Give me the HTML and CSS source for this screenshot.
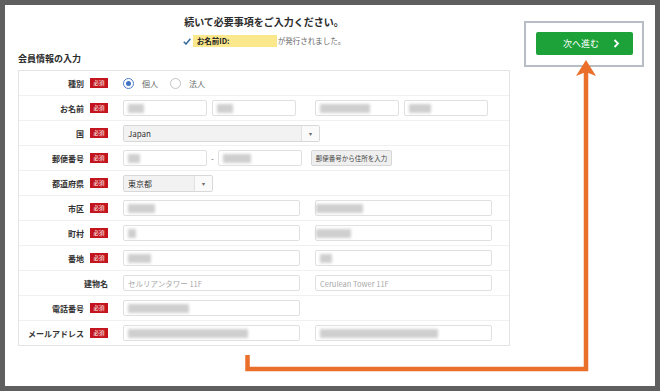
FILE: index.html
```html
<!DOCTYPE html>
<html lang="ja">
<head>
    <meta charset="UTF-8">
    <meta name="viewport" content="width=device-width, initial-scale=1.0">
    <title>会員情報の入力</title>
    <link rel="stylesheet" href="styles.css">
</head>
<body>
<div class="frame">
    <div class="page">
        <div class="main">
            <div class="lead">
                <h1>続いて必要事項をご入力ください。</h1>
                <p class="issued">
                    <svg class="check" width="8" height="7" viewBox="0 0 8 7"><path d="M0.8 3.8 L3 6 L7.4 0.8" fill="none" stroke="#3a6d9e" stroke-width="1.6"/></svg>
                    <span class="id-mark">お名前ID:</span>
                    <span class="issued-text">が発行されました。</span>
                </p>
            </div>
            <h2>会員情報の入力</h2>

            <div class="form-table">
                <div class="row">
                    <div class="label">種別<span class="req">必須</span></div>
                    <div class="field">
                        <span class="radio on"></span><span class="opt">個人</span>
                        <span class="radio"></span><span class="opt">法人</span>
                    </div>
                </div>
                <div class="row">
                    <div class="label">お名前<span class="req">必須</span></div>
                    <div class="field">
                        <span class="box w-half"><span class="blur b16"></span></span>
                        <span class="box w-half gap-5"><span class="blur b16"></span></span>
                        <span class="box w-half gap-19"><span class="blur b50"></span></span>
                        <span class="box w-half gap-5"><span class="blur b22"></span></span>
                    </div>
                </div>
                <div class="row">
                    <div class="label">国<span class="req">必須</span></div>
                    <div class="field">
                        <span class="select w-country"><span class="val">Japan</span><span class="caret">▾</span></span>
                    </div>
                </div>
                <div class="row">
                    <div class="label">郵便番号<span class="req">必須</span></div>
                    <div class="field">
                        <span class="box w-half"><span class="blur b12"></span></span>
                        <span class="dash">-</span>
                        <span class="box w-half"><span class="blur b28"></span></span>
                        <span class="zip-btn">郵便番号から住所を入力</span>
                    </div>
                </div>
                <div class="row">
                    <div class="label">都道府県<span class="req">必須</span></div>
                    <div class="field">
                        <span class="select w-pref"><span class="val">東京都</span><span class="caret">▾</span></span>
                    </div>
                </div>
                <div class="row">
                    <div class="label">市区<span class="req">必須</span></div>
                    <div class="field">
                        <span class="box w-full"><span class="blur b27"></span></span>
                        <span class="box w-full gap-15 flush"><span class="blur b47"></span></span>
                    </div>
                </div>
                <div class="row">
                    <div class="label">町村<span class="req">必須</span></div>
                    <div class="field">
                        <span class="box w-full"><span class="blur b8"></span></span>
                        <span class="box w-full gap-15 flush"><span class="blur b35"></span></span>
                    </div>
                </div>
                <div class="row">
                    <div class="label">番地<span class="req">必須</span></div>
                    <div class="field">
                        <span class="box w-full"><span class="blur b23"></span></span>
                        <span class="box w-full gap-15"><span class="blur b12"></span></span>
                    </div>
                </div>
                <div class="row">
                    <div class="label">建物名</div>
                    <div class="field">
                        <span class="box w-full placeholder">セルリアンタワー 11F</span>
                        <span class="box w-full gap-15 placeholder">Cerulean Tower 11F</span>
                    </div>
                </div>
                <div class="row">
                    <div class="label">電話番号<span class="req">必須</span></div>
                    <div class="field">
                        <span class="box w-full"><span class="blur b61"></span></span>
                    </div>
                </div>
                <div class="row">
                    <div class="label">メールアドレス<span class="req">必須</span></div>
                    <div class="field">
                        <span class="box w-full"><span class="blur b120"></span></span>
                        <span class="box w-full gap-15"><span class="blur b118"></span></span>
                    </div>
                </div>
            </div>
        </div>

        <div class="side">
            <div class="next-box">
                <button class="next-btn">次へ進む
                    <svg width="7" height="9" viewBox="0 0 7 9"><path d="M1.5 1 L5 4.5 L1.5 8" fill="none" stroke="#fff" stroke-width="1.8"/></svg>
                </button>
            </div>
        </div>

        <svg class="arrow" width="650" height="381" viewBox="0 0 650 381">
            <path d="M242.5 350 V364 H581 V66" fill="none" stroke="#ea6f2b" stroke-width="4.5"/>
            <polygon points="581,55 591,71 581,67 571,71" fill="#ea6f2b"/>
        </svg>
    </div>
</div>
</body>
</html>
```

FILE: styles.css
```css
* {
    box-sizing: border-box;
}

body {
    margin: 0;
    background: #5f5f5f;
    font-family: "Noto Sans CJK JP", "Noto Sans", sans-serif;
    color: #333;
}

.frame {
    padding: 5px;
    height: 391px;
}

.page {
    position: relative;
    display: flex;
    height: 381px;
    background: #fff;
}

.main {
    width: 505px;
    padding: 10px 0 0 13px;
}

.lead {
    text-align: center;
}

.lead h1 {
    margin: 0;
    font-size: 10px;
    line-height: 14px;
    font-weight: bold;
    color: #2b2b2b;
}

.issued {
    margin: 6px 0 0;
    display: flex;
    justify-content: center;
    align-items: center;
    font-size: 7.5px;
    line-height: 12px;
}

.check {
    margin-right: 2px;
}

.id-mark {
    width: 84px;
    height: 12px;
    padding-left: 4px;
    background: #fbe88c;
    font-weight: bold;
    color: #222;
    text-align: left;
}

.issued-text {
    margin-left: 1px;
    color: #666;
}

.main h2 {
    margin: 6px 0 0;
    font-size: 9px;
    line-height: 12px;
    font-weight: bold;
    color: #2b2b2b;
}

.form-table {
    margin-top: 5px;
    width: 492px;
    border: 1px solid #e4e4e4;
}

.row {
    display: flex;
    align-items: center;
    height: 25px;
    border-bottom: 1px solid #f0f0f0;
}

.row:last-child {
    border-bottom: none;
    height: 24px;
}

.label {
    width: 97px;
    display: flex;
    justify-content: flex-end;
    align-items: center;
    gap: 6px;
    padding-right: 8px;
    font-size: 8px;
    font-weight: bold;
    color: #333;
    white-space: nowrap;
}

.req {
    width: 18px;
    height: 10px;
    display: flex;
    align-items: center;
    justify-content: center;
    background: #c3151d;
    color: #fff;
    font-size: 5.5px;
    font-weight: normal;
}

.field {
    display: flex;
    align-items: center;
    padding-left: 7px;
}

.radio {
    width: 11px;
    height: 11px;
    border-radius: 50%;
    border: 1px solid #c4c4c4;
    background: #fff;
}

.radio.on {
    border-color: #4a7ccc;
    display: flex;
    align-items: center;
    justify-content: center;
}

.radio.on::after {
    content: "";
    width: 5px;
    height: 5px;
    border-radius: 50%;
    background: #3f72c4;
}

.opt {
    margin: 0 12px 0 8px;
    font-size: 8px;
    color: #666;
}

.box {
    height: 16px;
    display: flex;
    align-items: center;
    padding-left: 4px;
    border: 1px solid #e0e0e0;
    border-radius: 2px;
    background: #fff;
    font-size: 8px;
}

.box.flush {
    padding-left: 0;
}

.w-half {
    width: 84px;
}

.w-full {
    width: 177px;
}

.gap-5 {
    margin-left: 5px;
}

.gap-15 {
    margin-left: 15px;
}

.gap-19 {
    margin-left: 19px;
}

.blur {
    height: 9px;
    background: #cfcfcf;
    filter: blur(1.5px);
}

.b8 { width: 8px; }
.b12 { width: 12px; }
.b16 { width: 16px; }
.b22 { width: 22px; }
.b23 { width: 23px; }
.b27 { width: 27px; }
.b28 { width: 28px; }
.b35 { width: 35px; }
.b47 { width: 47px; }
.b50 { width: 50px; }
.b61 { width: 61px; }
.b118 { width: 118px; }
.b120 { width: 120px; }

.placeholder {
    color: #a8a8a8;
    font-size: 7.5px;
}

.select {
    height: 17px;
    display: flex;
    border: 1px solid #d8d8d8;
    border-radius: 2px;
    font-size: 8px;
    color: #333;
}

.select .val {
    flex: 1;
    display: flex;
    align-items: center;
    padding-left: 4px;
    background: #f2f2f2;
}

.select .caret {
    width: 18px;
    display: flex;
    align-items: center;
    justify-content: center;
    border-left: 1px solid #e2e2e2;
    background: #fafafa;
    font-size: 6px;
    color: #666;
}

.w-country {
    width: 197px;
}

.w-pref {
    width: 90px;
}

.dash {
    width: 11px;
    text-align: center;
    font-size: 8px;
    color: #666;
}

.zip-btn {
    margin-left: 9px;
    width: 81px;
    height: 16px;
    display: flex;
    align-items: center;
    justify-content: center;
    background: #efefef;
    border: 1px solid #d6d6d6;
    border-radius: 2px;
    font-size: 6.5px;
    color: #444;
    white-space: nowrap;
}

.side {
    padding: 16px 0 0 14px;
}

.next-box {
    width: 120px;
    height: 46px;
    padding: 9px 0 0 10px;
    border: 2px solid #b8bcc4;
}

.next-btn {
    width: 97px;
    height: 23px;
    display: flex;
    align-items: center;
    gap: 14px;
    padding: 0 0 0 27px;
    background: #1da23a;
    border: none;
    border-radius: 2px;
    color: #fff;
    font-family: "Noto Sans CJK JP", sans-serif;
    font-size: 9px;
}

.arrow {
    position: absolute;
    left: 0;
    top: 0;
    pointer-events: none;
}
```
